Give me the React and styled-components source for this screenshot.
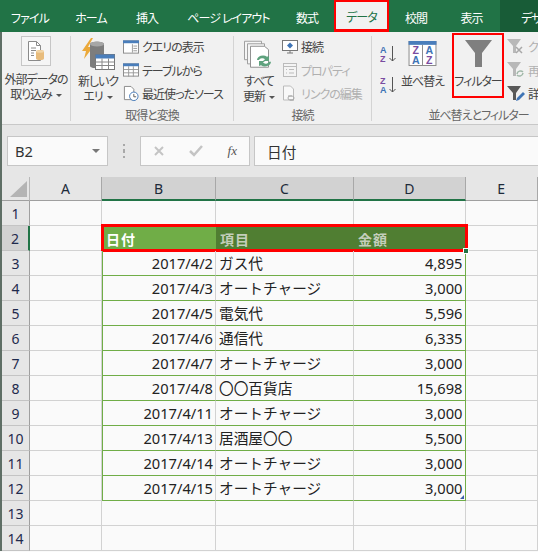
import React from "react";
import styled, { createGlobalStyle } from "styled-components";

const JP = `"Noto Sans CJK JP", "Noto Sans", sans-serif`;
const LATIN = `"Noto Sans", "Noto Sans CJK JP", sans-serif`;
const COLS = "28px 72px 114px 138px 111.5px 72.5px";

const Global = createGlobalStyle`
  html, body { margin: 0; padding: 0; background: #fafafa; }
  body { width: 538px; height: 552px; overflow: hidden; font-family: ${JP}; }
`;

const Page = styled.div`
  width: 538px;
  height: 552px;
  overflow: hidden;
`;

/* tabs */
const TabBar = styled.div`
  display: flex;
  height: 32px;
  background: #217346;
`;
const Tab = styled.div`
  width: ${(p) => p.$w}px;
  flex: none;
  display: flex;
  align-items: center;
  justify-content: center;
  color: #fff;
  font-size: 12px;
  font-feature-settings: "palt";
  letter-spacing: -0.9px;
  white-space: nowrap;
  box-sizing: border-box;
  padding: 2px ${(p) => p.$pr || 0}px 0 0;
`;
const ActiveTab = styled(Tab)`
  background: #f1f1f1;
  color: #217346;
  border: 2px solid #f00;
  border-bottom-width: 3px;
`;
const DesignTab = styled(Tab)`
  flex: 1;
  background: #185c37;
  justify-content: flex-start;
  padding-left: 21px;
`;

const Main = styled.div`
  border-left: 2px solid #5f6f66;
`;

/* ribbon */
const Ribbon = styled.div`
  display: flex;
  height: 93px;
  background: #f1f1f1;
  border-bottom: 1px solid #c8c8c8;
  box-sizing: border-box;
  color: #444;
  overflow: hidden;
  font-feature-settings: "palt";
  letter-spacing: -1px;
`;
const Group = styled.div`
  width: ${(p) => p.$w}px;
  flex: none;
  box-sizing: border-box;
  display: flex;
  flex-direction: column;
  margin: 4px 0 3px;
  border-right: ${(p) => (p.$last ? "none" : "1px solid #d4d4d4")};
`;
const GroupBody = styled.div`
  flex: 1;
  display: flex;
  min-height: 0;
`;
const GroupLabel = styled.div`
  height: 10px;
  line-height: 10px;
  margin-bottom: 1px;
  padding-left: ${(p) => p.$pl || 0}px;
  text-align: center;
  font-size: 12px;
  color: #666;
  white-space: nowrap;
`;
const LargeButton = styled.div`
  width: ${(p) => p.$w}px;
  flex: none;
  margin-left: ${(p) => p.$ml || 0}px;
  display: flex;
  flex-direction: column;
  align-items: center;
  font-size: 12px;
  line-height: 15px;
  color: #444;
  white-space: nowrap;
`;
const ImportBox = styled.div`
  width: 30px;
  height: 30px;
  box-sizing: border-box;
  border: 1px solid #c6c6c6;
  background: #f5f5f5;
  display: flex;
  align-items: center;
  justify-content: center;
  margin-bottom: 5px;
`;
const IconWrap = styled.div`
  height: ${(p) => p.$h}px;
  padding-top: ${(p) => p.$top || 0}px;
  box-sizing: border-box;
  display: flex;
  align-items: flex-start;
  justify-content: center;
`;
const FilterButton = styled(LargeButton)`
  box-sizing: border-box;
  border: 2px solid #f00;
  height: 65px;
  margin-top: -3px;
`;
const Caret = styled.span`
  display: inline-block;
  width: 0;
  height: 0;
  margin-left: 4px;
  vertical-align: middle;
  border-left: 3px solid transparent;
  border-right: 3px solid transparent;
  border-top: 3px solid #555;
`;
const SmallList = styled.div`
  flex: none;
  margin-left: ${(p) => p.$ml || 0}px;
  display: flex;
  flex-direction: column;
  gap: 2px;
`;
const SmallItem = styled.div`
  height: 21.5px;
  display: flex;
  align-items: center;
  gap: 3px;
  font-size: 12px;
  color: ${(p) => (p.$off ? "#b0b0b0" : "#444")};
  white-space: nowrap;
`;
const SortColumn = styled.div`
  flex: none;
  margin: 9px 0 0 8px;
  width: 20px;
  display: flex;
  flex-direction: column;
  gap: 13px;
`;

/* formula bar */
const FormulaBar = styled.div`
  height: 52px;
  box-sizing: border-box;
  display: flex;
  align-items: center;
  padding: 0 0 0 5px;
  background: #e6e6e6;
`;
const NameBox = styled.div`
  width: 101px;
  height: 30px;
  box-sizing: border-box;
  flex: none;
  background: #fafafa;
  border: 1px solid #c6c6c6;
  display: flex;
  align-items: center;
  justify-content: space-between;
  padding: 0 7px;
  font: 14.67px ${LATIN};
  color: #333;
`;
const NameCaret = styled(Caret)`
  border-left-width: 4px;
  border-right-width: 4px;
  border-top: 4px solid #777;
  margin: 0;
`;
const Grip = styled.div`
  width: 2px;
  height: 10px;
  flex: none;
  margin: 0 15px;
  border-top: 2px solid #a8a8a8;
  border-bottom: 2px solid #a8a8a8;
  background: linear-gradient(#e6e6e6 30%, #a8a8a8 30%, #a8a8a8 70%, #e6e6e6 70%);
`;
const FxBox = styled.div`
  width: 110px;
  height: 30px;
  box-sizing: border-box;
  flex: none;
  background: #fafafa;
  border: 1px solid #c6c6c6;
  display: flex;
  align-items: center;
  justify-content: space-between;
  padding: 0 12px;
`;
const FxText = styled.span`
  font: italic 13px "Liberation Serif", serif;
  color: #555;
`;
const FormulaInput = styled.div`
  flex: 1;
  height: 30px;
  box-sizing: border-box;
  margin-left: 4px;
  background: #fafafa;
  border: 1px solid #c6c6c6;
  border-right: none;
  display: flex;
  align-items: center;
  padding-left: 12px;
  font-size: 14.67px;
  color: #333;
`;

/* sheet */
const Sheet = styled.div`
  background: #fafafa;
  font: 14.67px ${LATIN};
  color: #222;
`;
const SheetRow = styled.div`
  display: grid;
  grid-template-columns: ${COLS};
  height: ${(p) => p.$h || 25}px;
`;
const Corner = styled.div`
  background: #e6e6e6;
  border-right: 1px solid #b8b8b8;
  border-bottom: 1px solid #9f9f9f;
  display: flex;
  align-items: flex-end;
  justify-content: flex-end;
  padding: 0 2px 3px 0;
  box-sizing: border-box;
`;
const ColHead = styled.div`
  box-sizing: border-box;
  display: flex;
  align-items: center;
  justify-content: center;
  font-size: 14px;
  color: #1d2a3a;
  background: ${(p) => (p.$on ? "#d2d2d2" : "#e6e6e6")};
  border-right: 1px solid #a8a8a8;
  border-bottom: ${(p) => (p.$on ? "2px solid #217346" : "1px solid #9f9f9f")};
`;
const RowHead = styled.div`
  box-sizing: border-box;
  display: flex;
  align-items: center;
  justify-content: center;
  font-size: 14px;
  color: #1f2a4d;
  background: ${(p) => (p.$on ? "#d2d2d2" : "#e6e6e6")};
  border-right: ${(p) => (p.$on ? "2px solid #217346" : "1px solid #9f9f9f")};
  border-bottom: 1px solid #c4c4c4;
`;
const Cell = styled.div`
  box-sizing: border-box;
  position: relative;
  display: flex;
  align-items: center;
  white-space: nowrap;
  padding: 0 2px 1px 3px;
  justify-content: ${(p) => (p.$right ? "flex-end" : "flex-start")};
  border-right: 1px solid ${(p) => (p.$edge ? "#70ad47" : "#d2d2d2")};
  border-bottom: 1px solid ${(p) => (p.$table ? "#70ad47" : "#d2d2d2")};
  border-left: ${(p) => (p.$first ? "1px solid #70ad47" : "none")};
  font-family: ${(p) => (p.$jp ? JP : LATIN)};
`;
const HeadBand = styled.div`
  grid-column: 3 / 6;
  position: relative;
  display: grid;
  grid-template-columns: 114px 138px 111.5px;
  &::after {
    content: "";
    position: absolute;
    inset: -2px -2px -1px -1px;
    border: 3px solid #f00;
    pointer-events: none;
  }
`;
const HeadCell = styled.div`
  box-sizing: border-box;
  display: flex;
  align-items: center;
  padding-left: 4px;
  font-family: ${JP};
  font-size: 14px;
  font-weight: 700;
  letter-spacing: 1px;
  color: ${(p) => (p.$first ? "#fff" : "#c4cebb")};
  background: ${(p) => (p.$first ? "#70ad47" : "#507e32")};
`;
const FillHandle = styled.div`
  position: absolute;
  z-index: 3;
  right: -3px;
  bottom: -3px;
  width: 4px;
  height: 4px;
  background: #217346;
  border: 1px solid #fff;
`;
const TableCorner = styled.div`
  position: absolute;
  right: 1px;
  bottom: 1px;
  width: 0;
  height: 0;
  border-left: 4px solid transparent;
  border-bottom: 4px solid #3a5fa8;
`;

const ImportIcon = () => (
  <svg width="20" height="22" viewBox="0 0 20 22">
    <path d="M2.5 1.5h8l4 4v15h-12z" fill="#fff" stroke="#8a8a8a" />
    <path d="M10.5 1.5v4h4" fill="none" stroke="#8a8a8a" />
    <path d="M5 8h5M5 10.5h5M5 13h3M5 15.5h3" stroke="#8a8a8a" />
    <path d="M10 11.5c0-2 8-2 8 0v7c0 2-8 2-8 0z" fill="#e8bc7c" />
    <ellipse cx="14" cy="11.5" rx="4" ry="1.2" fill="#f2d6a8" />
  </svg>
);
const QueryIcon = () => (
  <svg width="33" height="32" viewBox="0 0 33 32">
    <path d="M9 0L0 13h4l-2 8 9-12H6l5-9z" fill="#eba93a" />
    <path d="M8 6c0-3 14-3 14 0v22c0 3-14 3-14 0z" fill="#7d7d7d" />
    <ellipse cx="15" cy="6" rx="7" ry="2.5" fill="#a6a6a6" />
    <rect x="13.5" y="16.5" width="19" height="15" fill="#fff" stroke="#777" />
    <rect x="13.5" y="16.5" width="19" height="4" fill="#4a7ebb" />
    <path d="M20 20.5v11M26.5 20.5v11M13.5 24h19M13.5 27.5h19" stroke="#888" />
  </svg>
);
const TableSmall = ({ tall }) => (
  <svg width="16" height="16" viewBox="0 0 17 16">
    <rect x="0.5" y="1.5" width="16" height="13" fill="#fff" stroke="#888" />
    <rect x="0" y="1" width="17" height="3" fill="#4a7ebb" />
    {tall ? (
      <path d="M6 4v11M11 4v11M1 7.5h15M1 11h15" stroke="#999" />
    ) : (
      <path d="M10 5v9M11 7h4M11 9.5h4M11 12h4" stroke="#999" />
    )}
  </svg>
);
const RecentIcon = () => (
  <svg width="16" height="17" viewBox="0 0 17 17">
    <path d="M1.5 1h7l3 3v11h-10z" fill="#fff" stroke="#888" />
    <circle cx="11.5" cy="11.5" r="4.5" fill="#fff" stroke="#3f74b5" />
    <path d="M11.5 9v3h2.5" fill="none" stroke="#555" />
  </svg>
);
const RefreshIcon = () => (
  <svg width="30" height="31" viewBox="0 0 30 37" preserveAspectRatio="none">
    <path d="M0.5 1.5h17v22h-17z" fill="#f5f5f5" stroke="#999" />
    <path d="M3.5 4.5h17v24h-17z" fill="#f5f5f5" stroke="#999" />
    <path d="M6.5 7.5h14l4 4v21h-18z" fill="#fff" stroke="#888" />
    <path d="M13 24a6 6 0 0 1 10-4l2-1v6h-6l2-2a3.5 3.5 0 0 0-6 1z" fill="#5fa27e" />
    <path d="M27 26a6 6 0 0 1-10 4l-2 1v-6h6l-2 2a3.5 3.5 0 0 0 6-1z" fill="#5fa27e" />
  </svg>
);
const ConnectIcon = () => (
  <svg width="16" height="16" viewBox="0 0 16 16">
    <rect x="0.5" y="1.5" width="15" height="10" fill="#fff" stroke="#777" />
    <path d="M8 3.5l3 3-3 3-3-3z" fill="#3f74b5" />
    <path d="M5 14h6M8 12v2" stroke="#777" />
  </svg>
);
const PropsIcon = () => (
  <svg width="16" height="16" viewBox="0 0 16 16">
    <rect x="1.5" y="1.5" width="13" height="13" fill="#f4f4f4" stroke="#bbb" />
    <path d="M1.5 4.5h13M4 7.5h1M7 7.5h5M4 11h1M7 11h5" stroke="#bbb" />
  </svg>
);
const LinkIcon = () => (
  <svg width="16" height="17" viewBox="0 0 16 17">
    <path d="M1.5 1h7l3 3v11h-10z" fill="#f8f8f8" stroke="#bbb" />
    <path d="M6 11h4a2 2 0 0 1 0 4H8M12 15H8a2 2 0 0 1 0-4h2" fill="none" stroke="#aaa" />
  </svg>
);
const SortSmall = ({ top, bottom, topColor, bottomColor }) => (
  <svg width="17" height="18" viewBox="0 0 17 18" fontFamily="Liberation Sans, sans-serif" fontSize="9" fontWeight="700" letterSpacing="0">
    <text x="0" y="8" fill={topColor}>{top}</text>
    <text x="0" y="17" fill={bottomColor}>{bottom}</text>
    <path d="M12.5 1v15M9.5 13l3 3 3-3" fill="none" stroke="#555" />
  </svg>
);
const SortLarge = () => (
  <svg width="29" height="25" viewBox="0 0 29 26" fontFamily="Liberation Sans, sans-serif" fontSize="11" fontWeight="700" textAnchor="middle" letterSpacing="0">
    <rect x="0.5" y="0.5" width="28" height="25" fill="#fff" stroke="#888" />
    <rect x="0" y="0" width="29" height="4" fill="#4a7ebb" />
    <path d="M14.5 4v21" stroke="#888" />
    <text x="7.5" y="14" fill="#7a4ca0">Z</text>
    <text x="7.5" y="24" fill="#3f74b5">A</text>
    <text x="21.5" y="14" fill="#3f74b5">A</text>
    <text x="21.5" y="24" fill="#7a4ca0">Z</text>
  </svg>
);
const Funnel = () => (
  <svg width="27" height="27" viewBox="0 0 27 27">
    <path d="M0 0h27L17 13v14h-7V13z" fill="#7f7f7f" />
  </svg>
);
const ClearIcon = () => (
  <svg width="18" height="16" viewBox="0 0 18 16">
    <path d="M0 0h14L9 7v7H6V7z" fill="#b8b8b8" />
    <path d="M9 8l6 6M15 8l-6 6" stroke="#a8a8a8" strokeWidth="1.5" />
  </svg>
);
const ReapplyIcon = () => (
  <svg width="18" height="16" viewBox="0 0 18 16">
    <path d="M0 0h14L9 7v7H6V7z" fill="#b8b8b8" />
    <path d="M10 12a3.5 3.5 0 0 1 6-2M16 11a3.5 3.5 0 0 1-6 2" fill="none" stroke="#a0b8a8" strokeWidth="1.5" />
  </svg>
);
const AdvancedIcon = () => (
  <svg width="18" height="18" viewBox="0 0 18 18">
    <path d="M0 1h14L9 8v7H6V8z" fill="#595959" />
    <path d="M9 16l1-3 6-6 2 2-6 6z" fill="#3f74b5" />
  </svg>
);
const CheckMark = () => (
  <svg width="14" height="12" viewBox="0 0 14 12">
    <path d="M1 6l4 4 8-9" fill="none" stroke="#c4c4c4" strokeWidth="2.5" />
  </svg>
);
const CrossMark = () => (
  <svg width="12" height="12" viewBox="0 0 12 12">
    <path d="M2 2l8 8M10 2l-8 8" fill="none" stroke="#c4c4c4" strokeWidth="2" />
  </svg>
);

const rows = [
  ["2017/4/2", "ガス代", "4,895"],
  ["2017/4/3", "オートチャージ", "3,000"],
  ["2017/4/5", "電気代", "5,596"],
  ["2017/4/6", "通信代", "6,335"],
  ["2017/4/7", "オートチャージ", "3,000"],
  ["2017/4/8", "〇〇百貨店", "15,698"],
  ["2017/4/11", "オートチャージ", "3,000"],
  ["2017/4/13", "居酒屋〇〇", "5,500"],
  ["2017/4/14", "オートチャージ", "3,000"],
  ["2017/4/15", "オートチャージ", "3,000"],
];

const EmptyRow = ({ n }) => (
  <SheetRow>
    <RowHead>{n}</RowHead>
    <Cell />
    <Cell />
    <Cell />
    <Cell />
    <Cell />
  </SheetRow>
);

export default function App() {
  return (
    <Page>
      <Global />
      <TabBar>
        <Tab $w={60}>ファイル</Tab>
        <Tab $w={62}>ホーム</Tab>
        <Tab $w={50}>挿入</Tab>
        <Tab $w={113}>ページ レイアウト</Tab>
        <Tab $w={49} $pr={5}>数式</Tab>
        <ActiveTab $w={55}>データ</ActiveTab>
        <Tab $w={54}>校閲</Tab>
        <Tab $w={57}>表示</Tab>
        <DesignTab>デザイン</DesignTab>
      </TabBar>
      <Main>
        <Ribbon>
          <Group $w={69}>
            <GroupBody>
              <LargeButton $w={68}>
                <ImportBox><ImportIcon /></ImportBox>
                <span>外部データの</span>
                <span>取り込み<Caret /></span>
              </LargeButton>
            </GroupBody>
          </Group>
          <Group $w={163}>
            <GroupBody>
              <LargeButton $w={48} $ml={3}>
                <IconWrap $h={37} $top={2}><QueryIcon /></IconWrap>
                <span>新しいク</span>
                <span>エリ<Caret /></span>
              </LargeButton>
              <SmallList $ml={1}>
                <SmallItem><TableSmall />クエリの表示</SmallItem>
                <SmallItem><TableSmall tall />テーブルから</SmallItem>
                <SmallItem><RecentIcon />最近使ったソース</SmallItem>
              </SmallList>
            </GroupBody>
            <GroupLabel>取得と変換</GroupLabel>
          </Group>
          <Group $w={138}>
            <GroupBody>
              <LargeButton $w={44} $ml={3}>
                <IconWrap $h={37} $top={4}><RefreshIcon /></IconWrap>
                <span>すべて</span>
                <span>更新<Caret /></span>
              </LargeButton>
              <SmallList $ml={1}>
                <SmallItem><ConnectIcon />接続</SmallItem>
                <SmallItem $off><PropsIcon />プロパティ</SmallItem>
                <SmallItem $off><LinkIcon />リンクの編集</SmallItem>
              </SmallList>
            </GroupBody>
            <GroupLabel>接続</GroupLabel>
          </Group>
          <Group $w={166} $last>
            <GroupBody>
              <SortColumn>
                <SortSmall top="A" bottom="Z" topColor="#3f74b5" bottomColor="#7a4ca0" />
                <SortSmall top="Z" bottom="A" topColor="#7a4ca0" bottomColor="#3f74b5" />
              </SortColumn>
              <LargeButton $w={45}>
                <IconWrap $h={37} $top={5}><SortLarge /></IconWrap>
                <span>並べ替え</span>
              </LargeButton>
              <FilterButton $w={52} $ml={7}>
                <IconWrap $h={38} $top={5}><Funnel /></IconWrap>
                <span>フィルター</span>
              </FilterButton>
              <SmallList $ml={3}>
                <SmallItem $off><ClearIcon />クリア</SmallItem>
                <SmallItem $off><ReapplyIcon />再適用</SmallItem>
                <SmallItem><AdvancedIcon />詳細設定</SmallItem>
              </SmallList>
            </GroupBody>
            <GroupLabel $pl={47}>並べ替えとフィルター</GroupLabel>
          </Group>
        </Ribbon>
        <FormulaBar>
          <NameBox>B2<NameCaret /></NameBox>
          <Grip />
          <FxBox><CrossMark /><CheckMark /><FxText>fx</FxText></FxBox>
          <FormulaInput>日付</FormulaInput>
        </FormulaBar>
        <Sheet>
          <SheetRow $h={24}>
            <Corner>
              <svg width="17" height="16" viewBox="0 0 17 16"><path d="M17 0v16H0z" fill="#b4b4b4" /></svg>
            </Corner>
            <ColHead>A</ColHead>
            <ColHead $on>B</ColHead>
            <ColHead $on>C</ColHead>
            <ColHead $on>D</ColHead>
            <ColHead>E</ColHead>
          </SheetRow>

          <EmptyRow n={1} />

          <SheetRow>
            <RowHead $on>2</RowHead>
            <Cell />
            <HeadBand>
              <HeadCell $first>日付</HeadCell>
              <HeadCell>項目</HeadCell>
              <HeadCell>金額</HeadCell>
              <FillHandle />
            </HeadBand>
            <Cell />
          </SheetRow>

          {rows.map(([date, item, amount], i) => (
            <SheetRow key={date}>
              <RowHead>{i + 3}</RowHead>
              <Cell />
              <Cell $right $table $first>{date}</Cell>
              <Cell $jp $table>{item}</Cell>
              <Cell $right $table $edge>
                {amount}
                {i === rows.length - 1 && <TableCorner />}
              </Cell>
              <Cell />
            </SheetRow>
          ))}

          <EmptyRow n={13} />
          <EmptyRow n={14} />
        </Sheet>
      </Main>
    </Page>
  );
}
